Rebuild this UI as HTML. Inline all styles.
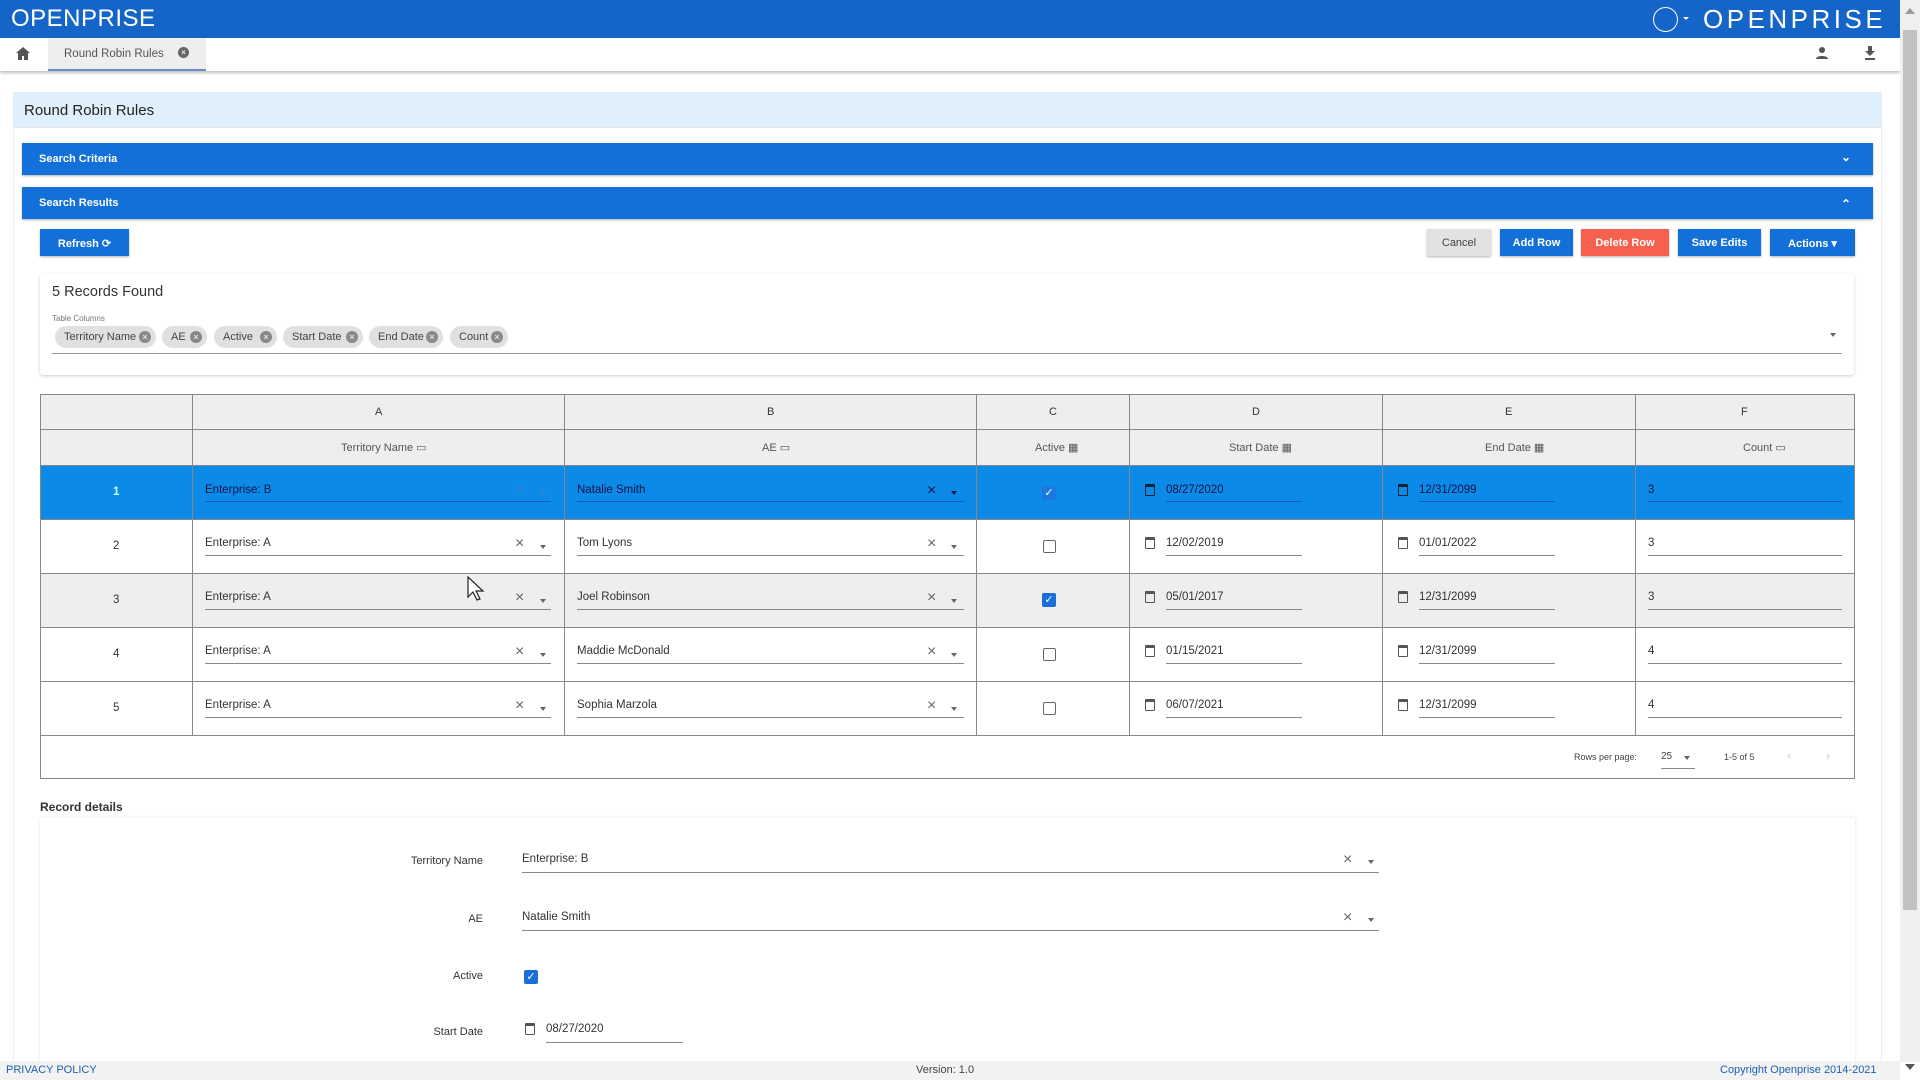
<!DOCTYPE html>
<html><head><meta charset="utf-8"><style>
*{box-sizing:border-box;margin:0;padding:0}
body{width:1920px;height:1080px;overflow:hidden;background:#fff;font-family:"Liberation Sans",sans-serif;color:#333;position:relative}
.a{position:absolute}
.hdr{left:0;top:0;width:1900px;height:38px;background:#1565c8;box-shadow:0 2px 4px rgba(0,0,0,.3)}
.logo{color:#fff;font-size:24px;letter-spacing:.5px;top:5px}
.tabs{left:0;top:38px;width:1900px;height:33px;background:#fff;box-shadow:0 2px 3px rgba(0,0,0,.25)}
.tab{left:48px;top:38px;width:158px;height:33px;background:#eee;border-bottom:2px solid #6a8fc7;font-size:11.5px;color:#555;padding:10px 0 0 16px}
.sb{left:1900px;top:0;width:20px;height:1062px;background:#f0f0f0}
.title{left:13px;top:92px;width:1869px;height:36px;background:#dff0fc;font-size:15px;color:#222;padding:10px 0 0 11px;border-bottom:1px solid #e4e4e4}
.outer{left:13px;top:128px;width:1869px;height:940px;border-left:1px solid #eee;border-right:1px solid #eee}
.bar{left:22px;width:1851px;height:32px;background:#1270d8;color:#fff;font-size:11px;font-weight:bold;padding:10px 0 0 17px;box-shadow:0 1px 2px rgba(0,0,0,.3)}
.btn{top:229px;height:27px;font-size:11px;font-weight:bold;color:#fff;text-align:center;padding-top:8px;box-shadow:0 1px 2px rgba(0,0,0,.3)}
.card{left:40px;top:274px;width:1814px;height:101px;border-radius:3px;box-shadow:0 1px 3px rgba(0,0,0,.2)}
.chip{top:326px;height:22px;border-radius:11px;background:#e0e0e0;font-size:11px;color:#444;padding:5px 0 0 9px}
.chip i{position:absolute;right:5px;top:5px;width:12px;height:12px;border-radius:50%;background:#888;color:#e0e0e0;font-style:normal;font-size:9px;text-align:center;line-height:12px;font-weight:bold}
.tbl{left:40px;top:394px;width:1815px;height:385px;border:1px solid #888}
.vl{width:1px;background:#888}
.hl{height:1px;background:#888;left:40px;width:1815px}
.t{font-size:11.5px;color:#333}
.ul{height:1px;background:#888}
.cb{width:13px;height:13px;border:1.5px solid #666;border-radius:2px}
.cbc{width:14px;height:14px;background:#1a6fd6;border-radius:2px;color:#fff;font-size:11px;text-align:center;line-height:14px}
.cal{width:10px;height:12px;border:1.5px solid #555;border-top-width:3px;border-radius:1px}
.x{font-size:16px;color:#666;line-height:1}
.ar{width:0;height:0;border-left:3.5px solid transparent;border-right:3.5px solid transparent;border-top:4px solid #666}
.foot{left:0;top:1061px;width:1900px;height:19px;background:#f2f2f2;font-size:11px}
</style></head><body>
<div class="a hdr"></div>
<div class="a logo" style="left:11px">OPENPRISE</div>
<div class="a" style="left:1653px;top:7px;width:25px;height:25px;border:1.5px solid #fff;border-radius:50%"></div>
<div class="a" style="left:1683px;top:17px;border-left:3px solid transparent;border-right:3px solid transparent;border-top:3px solid #fff"></div>
<div class="a logo" style="left:1703px;font-size:26px;letter-spacing:3.5px;top:4px">OPENPRISE</div>
<div class="a tabs"></div>
<svg class="a" style="left:16px;top:47px" width="14" height="13" viewBox="0 0 14 13"><path d="M7 0L0 6h2v7h4V9h2v4h4V6h2z" fill="#555"/></svg>
<div class="a tab">Round Robin Rules<span style="position:absolute;left:130px;top:9px;width:11px;height:11px;border-radius:50%;background:#666;color:#eee;font-size:8px;text-align:center;line-height:11px;font-weight:bold">×</span></div>
<svg class="a" style="left:1816px;top:47px" width="12" height="12" viewBox="0 0 12 12"><circle cx="6" cy="3" r="3" fill="#555"/><path d="M0 12c0-4 12-4 12 0z" fill="#555"/></svg>
<svg class="a" style="left:1864px;top:46px" width="12" height="14" viewBox="0 0 12 14"><path d="M4 0h4v5h3L6 10 1 5h3z M1 12h10v2H1z" fill="#555"/></svg>
<div class="a sb"><div class="a" style="left:3px;top:30px;width:14px;height:880px;background:#c1c1c1"></div><div class="a" style="left:5px;top:8px;border-left:5px solid transparent;border-right:5px solid transparent;border-bottom:6px solid #999"></div><div class="a" style="left:5px;top:1064px;border-left:5px solid transparent;border-right:5px solid transparent;border-top:6px solid #555"></div></div>

<div class="a title">Round Robin Rules</div>
<div class="a outer"></div>
<div class="a bar" style="top:143px">Search Criteria<span style="position:absolute;right:22px;top:7px;font-size:12px">&#8964;</span></div>
<div class="a bar" style="top:187px">Search Results<span style="position:absolute;right:22px;top:10px;font-size:12px">&#8963;</span></div>
<div class="a btn" style="left:40px;width:89px;background:#1270d8">Refresh &#10227;</div>
<div class="a btn" style="left:1427px;width:64px;background:#e2e2e2;color:#444;font-weight:normal">Cancel</div>
<div class="a btn" style="left:1500px;width:73px;background:#1270d8">Add Row</div>
<div class="a btn" style="left:1581px;width:88px;background:#f5604f">Delete Row</div>
<div class="a btn" style="left:1678px;width:83px;background:#1270d8">Save Edits</div>
<div class="a btn" style="left:1770px;width:85px;background:#1270d8">Actions &#9662;</div>

<div class="a card"></div>
<div class="a" style="left:52px;top:284px;font-size:14.5px;color:#333">5 Records Found</div>
<div class="a" style="left:52px;top:314px;font-size:8px;color:#777">Table Columns</div>
<div class="a chip" style="left:55px;width:101px">Territory Name<i>×</i></div>
<div class="a chip" style="left:162px;width:45px">AE<i>×</i></div>
<div class="a chip" style="left:214px;width:63px">Active<i>×</i></div>
<div class="a chip" style="left:283px;width:80px">Start Date<i>×</i></div>
<div class="a chip" style="left:369px;width:74px">End Date<i>×</i></div>
<div class="a chip" style="left:450px;width:58px">Count<i>×</i></div>
<div class="a ul" style="left:52px;top:353px;width:1790px;background:#999"></div>
<div class="a ar" style="left:1830px;top:333px"></div>

<div class="a tbl"></div>
<div class="a" style="left:41px;top:395px;width:1813px;height:70px;background:#eee"></div>
<div class="a" style="left:41px;top:465px;width:1813px;height:54px;background:#0b8ae8"></div>
<div class="a" style="left:41px;top:573px;width:1813px;height:54px;background:#eee"></div>
<div class="a hl" style="top:429px"></div><div class="a hl" style="top:465px"></div><div class="a hl" style="top:519px"></div><div class="a hl" style="top:573px"></div><div class="a hl" style="top:627px"></div><div class="a hl" style="top:681px"></div><div class="a hl" style="top:735px"></div>
<div class="a vl" style="left:192px;top:394px;height:341px"></div><div class="a vl" style="left:564px;top:394px;height:341px"></div><div class="a vl" style="left:976px;top:394px;height:341px"></div><div class="a vl" style="left:1129px;top:394px;height:341px"></div><div class="a vl" style="left:1382px;top:394px;height:341px"></div><div class="a vl" style="left:1635px;top:394px;height:341px"></div>
<div class="a t" style="left:375px;top:406px;font-size:11px">A</div>
<div class="a t" style="left:767px;top:406px;font-size:11px">B</div>
<div class="a t" style="left:1049px;top:406px;font-size:11px">C</div>
<div class="a t" style="left:1252px;top:406px;font-size:11px">D</div>
<div class="a t" style="left:1505px;top:406px;font-size:11px">E</div>
<div class="a t" style="left:1741px;top:406px;font-size:11px">F</div>
<div class="a t" style="left:341px;top:441px;font-size:11px;color:#555">Territory Name ▭</div>
<div class="a t" style="left:762px;top:441px;font-size:11px;color:#555">AE ▭</div>
<div class="a t" style="left:1035px;top:441px;font-size:11px;color:#555">Active ▦</div>
<div class="a t" style="left:1229px;top:441px;font-size:11px;color:#555">Start Date ▦</div>
<div class="a t" style="left:1485px;top:441px;font-size:11px;color:#555">End Date ▦</div>
<div class="a t" style="left:1743px;top:441px;font-size:11px;color:#555">Count ▭</div>

<!-- rows -->
<div class="a t" style="left:113px;top:486px;color:#cff;font-weight:bold">1</div>
<div class="a t" style="left:205px;top:484px;color:#114">Enterprise: B</div><div class="a ul" style="left:205px;top:501px;width:346px;background:#0a5cc0"></div><div class="a x" style="left:515px;top:483px;color:#3a7fd0">×</div><div class="a ar" style="left:540px;top:491px;border-top-color:#3a7fd0"></div>
<div class="a t" style="left:577px;top:484px;color:#114">Natalie Smith</div><div class="a ul" style="left:577px;top:501px;width:387px;background:#0a5cc0"></div><div class="a x" style="left:927px;top:483px;color:#114">×</div><div class="a ar" style="left:951px;top:491px;border-top-color:#114"></div>
<div class="a cbc" style="left:1042px;top:486px;background:#1a78e0">✓</div>
<div class="a cal" style="left:1145px;top:484px;border-color:#123"></div><div class="a t" style="left:1166px;top:484px;color:#114">08/27/2020</div><div class="a ul" style="left:1166px;top:501px;width:136px;background:#0a5cc0"></div>
<div class="a cal" style="left:1398px;top:484px;border-color:#123"></div><div class="a t" style="left:1419px;top:484px;color:#114">12/31/2099</div><div class="a ul" style="left:1419px;top:501px;width:136px;background:#0a5cc0"></div>
<div class="a t" style="left:1648px;top:484px;color:#114">3</div><div class="a ul" style="left:1648px;top:501px;width:194px;background:#0a5cc0"></div>

<div class="a t" style="left:113px;top:540px">2</div>
<div class="a t" style="left:205px;top:537px">Enterprise: A</div><div class="a ul" style="left:205px;top:555px;width:346px"></div><div class="a x" style="left:515px;top:536px">×</div><div class="a ar" style="left:540px;top:545px"></div>
<div class="a t" style="left:577px;top:537px">Tom Lyons</div><div class="a ul" style="left:577px;top:555px;width:387px"></div><div class="a x" style="left:927px;top:536px">×</div><div class="a ar" style="left:951px;top:545px"></div>
<div class="a cb" style="left:1043px;top:540px"></div>
<div class="a cal" style="left:1145px;top:537px"></div><div class="a t" style="left:1166px;top:537px">12/02/2019</div><div class="a ul" style="left:1166px;top:555px;width:136px"></div>
<div class="a cal" style="left:1398px;top:537px"></div><div class="a t" style="left:1419px;top:537px">01/01/2022</div><div class="a ul" style="left:1419px;top:555px;width:136px"></div>
<div class="a t" style="left:1648px;top:537px">3</div><div class="a ul" style="left:1648px;top:555px;width:194px"></div>

<div class="a t" style="left:113px;top:594px">3</div>
<div class="a t" style="left:205px;top:591px">Enterprise: A</div><div class="a ul" style="left:205px;top:609px;width:346px"></div><div class="a x" style="left:515px;top:590px">×</div><div class="a ar" style="left:540px;top:599px"></div>
<div class="a t" style="left:577px;top:591px">Joel Robinson</div><div class="a ul" style="left:577px;top:609px;width:387px"></div><div class="a x" style="left:927px;top:590px">×</div><div class="a ar" style="left:951px;top:599px"></div>
<div class="a cbc" style="left:1042px;top:593px">✓</div>
<div class="a cal" style="left:1145px;top:591px"></div><div class="a t" style="left:1166px;top:591px">05/01/2017</div><div class="a ul" style="left:1166px;top:609px;width:136px"></div>
<div class="a cal" style="left:1398px;top:591px"></div><div class="a t" style="left:1419px;top:591px">12/31/2099</div><div class="a ul" style="left:1419px;top:609px;width:136px"></div>
<div class="a t" style="left:1648px;top:591px">3</div><div class="a ul" style="left:1648px;top:609px;width:194px"></div>
<svg class="a" style="left:467px;top:576px" width="18" height="26" viewBox="0 0 18 26"><path d="M1 1v20l5-5 4 8 3-1-4-8h7z" fill="#fff" stroke="#222" stroke-width="1.2"/></svg>

<div class="a t" style="left:113px;top:648px">4</div>
<div class="a t" style="left:205px;top:645px">Enterprise: A</div><div class="a ul" style="left:205px;top:663px;width:346px"></div><div class="a x" style="left:515px;top:644px">×</div><div class="a ar" style="left:540px;top:653px"></div>
<div class="a t" style="left:577px;top:645px">Maddie McDonald</div><div class="a ul" style="left:577px;top:663px;width:387px"></div><div class="a x" style="left:927px;top:644px">×</div><div class="a ar" style="left:951px;top:653px"></div>
<div class="a cb" style="left:1043px;top:648px"></div>
<div class="a cal" style="left:1145px;top:645px"></div><div class="a t" style="left:1166px;top:645px">01/15/2021</div><div class="a ul" style="left:1166px;top:663px;width:136px"></div>
<div class="a cal" style="left:1398px;top:645px"></div><div class="a t" style="left:1419px;top:645px">12/31/2099</div><div class="a ul" style="left:1419px;top:663px;width:136px"></div>
<div class="a t" style="left:1648px;top:645px">4</div><div class="a ul" style="left:1648px;top:663px;width:194px"></div>

<div class="a t" style="left:113px;top:702px">5</div>
<div class="a t" style="left:205px;top:699px">Enterprise: A</div><div class="a ul" style="left:205px;top:717px;width:346px"></div><div class="a x" style="left:515px;top:698px">×</div><div class="a ar" style="left:540px;top:707px"></div>
<div class="a t" style="left:577px;top:699px">Sophia Marzola</div><div class="a ul" style="left:577px;top:717px;width:387px"></div><div class="a x" style="left:927px;top:698px">×</div><div class="a ar" style="left:951px;top:707px"></div>
<div class="a cb" style="left:1043px;top:702px"></div>
<div class="a cal" style="left:1145px;top:699px"></div><div class="a t" style="left:1166px;top:699px">06/07/2021</div><div class="a ul" style="left:1166px;top:717px;width:136px"></div>
<div class="a cal" style="left:1398px;top:699px"></div><div class="a t" style="left:1419px;top:699px">12/31/2099</div><div class="a ul" style="left:1419px;top:717px;width:136px"></div>
<div class="a t" style="left:1648px;top:699px">4</div><div class="a ul" style="left:1648px;top:717px;width:194px"></div>

<div class="a" style="left:1574px;top:752px;font-size:9px;color:#444">Rows per page:</div>
<div class="a" style="left:1661px;top:751px;font-size:10px;color:#444">25</div><div class="a ar" style="left:1684px;top:756px"></div><div class="a ul" style="left:1661px;top:768px;width:34px"></div>
<div class="a" style="left:1724px;top:752px;font-size:9px;color:#444">1-5 of 5</div>
<div class="a" style="left:1787px;top:748px;font-size:13px;color:#ccc">‹</div>
<div class="a" style="left:1826px;top:748px;font-size:13px;color:#ccc">›</div>

<div class="a" style="left:40px;top:800px;font-size:12px;font-weight:bold;color:#333">Record details</div>
<div class="a" style="left:40px;top:818px;width:1815px;height:250px;box-shadow:0 0 3px rgba(0,0,0,.12)"></div>
<div class="a t" style="left:380px;top:855px;width:103px;text-align:right;font-size:11px">Territory Name</div>
<div class="a t" style="left:522px;top:853px">Enterprise: B</div><div class="a ul" style="left:522px;top:872px;width:857px"></div><div class="a x" style="left:1343px;top:852px">×</div><div class="a ar" style="left:1368px;top:860px"></div>
<div class="a t" style="left:380px;top:913px;width:103px;text-align:right;font-size:11px">AE</div>
<div class="a t" style="left:522px;top:911px">Natalie Smith</div><div class="a ul" style="left:522px;top:930px;width:857px"></div><div class="a x" style="left:1343px;top:910px">×</div><div class="a ar" style="left:1368px;top:918px"></div>
<div class="a t" style="left:380px;top:970px;width:103px;text-align:right;font-size:11px">Active</div>
<div class="a cbc" style="left:524px;top:970px">✓</div>
<div class="a t" style="left:380px;top:1026px;width:103px;text-align:right;font-size:11px">Start Date</div>
<div class="a cal" style="left:525px;top:1023px"></div><div class="a t" style="left:546px;top:1023px">08/27/2020</div><div class="a ul" style="left:546px;top:1042px;width:137px"></div>

<div class="a foot"><span class="a" style="left:6px;top:3px;color:#1d5fb4">PRIVACY POLICY</span><span class="a" style="left:916px;top:3px;color:#444">Version: 1.0</span><span class="a" style="left:1720px;top:3px;color:#1d5fb4">Copyright Openprise 2014-2021</span></div>
</body></html>
